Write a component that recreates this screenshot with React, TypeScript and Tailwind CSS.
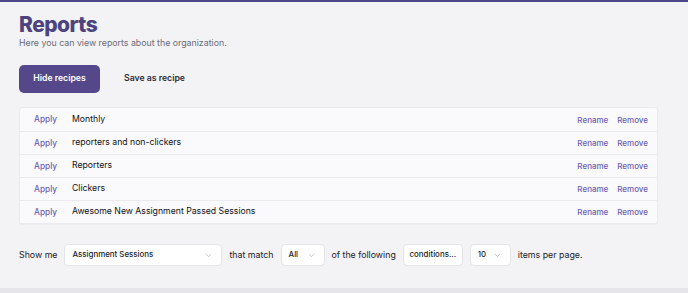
import { ChevronDown } from "lucide-react";

const RECIPES = [
  "Monthly",
  "reporters and non-clickers",
  "Reporters",
  "Clickers",
  "Awesome New Assignment Passed Sessions",
];

function Select({ label, width }: { label: string; width: string }) {
  return (
    <div
      className={`flex h-[22px] items-center justify-between rounded-[4px] border border-[#e3e4e8] bg-white pl-[7px] pr-[8px] text-[7.9px] font-medium text-[#222] ${width}`}
    >
      <span>{label}</span>
      <ChevronDown size={9} strokeWidth={1.5} className="text-[#9a9aa4]" />
    </div>
  );
}

export default function App() {
  return (
    <div
      className="flex h-[293px] flex-col overflow-hidden border-t-2 border-[#4f4785] bg-[#f3f3f6] text-[#1f1f24]"
      style={{ fontFamily: "Inter, 'Noto Sans', sans-serif" }}
    >
      <div className="flex-1 px-[19px] pt-[11px]">
        {/* Header */}
        <h1 className="text-[21px] font-extrabold leading-[24px] tracking-[-0.025em] text-[#4c437f]">Reports</h1>
        <p className="text-[8.8px] leading-[12px] text-[#6b6b76]">Here you can view reports about the organization.</p>

        {/* Actions */}
        <div className="mt-[16px] flex items-center gap-[24px]">
          <button className="h-[28px] w-[81px] rounded-[5px] bg-[#54488a] text-[8.7px] font-semibold text-white">
            Hide recipes
          </button>
          <button className="text-[8.7px] font-semibold text-[#2d2d35]">Save as recipe</button>
        </div>

        {/* Recipe table */}
        <div className="mt-[14px] w-[639px] overflow-hidden rounded-[3px] border border-[#ebebef] bg-[#fafafc] shadow-[0_1px_1px_rgba(0,0,0,0.03)]">
          {RECIPES.map((name, i) => (
            <div
              key={name}
              className={`flex h-[23px] items-center ${i > 0 ? "border-t border-[#ebebef]" : ""}`}
            >
              <span className="w-[52px] pl-[14px] text-[8.3px] font-medium text-[#6c5fb1]">Apply</span>
              <span className="flex-1 text-[8.7px] text-[#111116]">{name}</span>
              <span className="text-[8px] font-medium text-[#6c5fb1]">Rename</span>
              <span className="ml-[9px] mr-[9px] text-[8px] font-medium text-[#6c5fb1]">Remove</span>
            </div>
          ))}
        </div>

        {/* Filter sentence */}
        <div className="mt-[20px] flex items-center text-[8.8px] text-[#222228]">
          <span>Show me</span>
          <Select label="Assignment Sessions" width="ml-[7px] w-[158px]" />
          <span className="ml-[7px]">that match</span>
          <Select label="All" width="ml-[7px] w-[44px]" />
          <span className="ml-[7px]">of the following</span>
          <button className="ml-[7px] h-[22px] w-[60px] rounded-[4px] border border-[#e3e4e8] bg-white text-[7.9px] font-medium text-[#222]">
            conditions...
          </button>
          <Select label="10" width="ml-[7px] w-[41px]" />
          <span className="ml-[7px]">items per page.</span>
        </div>
      </div>
      <div className="h-[5px] bg-[#e6e6ea]" />
    </div>
  );
}
